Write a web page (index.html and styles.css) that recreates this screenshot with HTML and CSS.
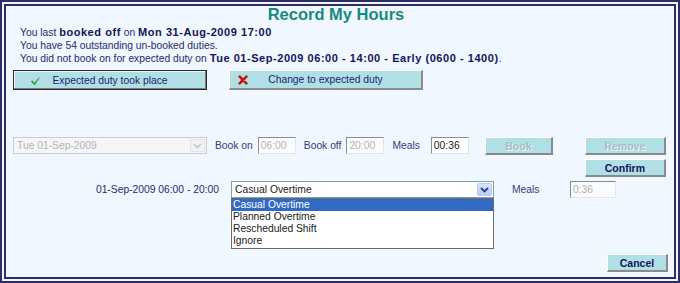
FILE: index.html
```html
<!DOCTYPE html>
<html lang="en">
<head>
    <meta charset="UTF-8">
    <title>Record My Hours</title>
    <link rel="stylesheet" href="styles.css">
</head>
<body>
    <div class="frame">
        <h1 class="title">Record My Hours</h1>

        <div class="info">
            <p class="info-first">You last <b>booked off</b> on <b>Mon 31-Aug-2009 17:00</b></p>
            <p>You have 54 outstanding un-booked duties.</p>
            <p>You did not book on for expected duty on <b>Tue 01-Sep-2009 06:00 - 14:00 - Early (0600 - 1400)</b>.</p>
        </div>

        <div class="choice-row">
            <button class="choice focused">
                <svg class="ico-check" width="12" height="11" viewBox="0 0 14 12">
                    <path d="M1 7 L3 6 L5 9 Q8 4 13 1 Q9 5 6 11 L4.5 11 Z" fill="#2f9a2a"/>
                </svg>
                <span>Expected duty took place</span>
            </button>
            <button class="choice second">
                <svg class="ico-cross" width="10" height="10" viewBox="0 0 12 12">
                    <path d="M2 2 L10 10 M10 2 L2 10" stroke="#c81414" stroke-width="3.2" stroke-linecap="round"/>
                </svg>
                <span>Change to expected duty</span>
            </button>
        </div>

        <div class="book-row">
            <div class="combo disabled date-combo">
                <span class="combo-text">Tue 01-Sep-2009</span>
                <span class="combo-arrow">
                    <svg width="9" height="6" viewBox="0 0 9 6"><path d="M1 1 L4.5 4.5 L8 1" stroke="#c4c8cc" stroke-width="1.6" fill="none"/></svg>
                </span>
            </div>
            <label class="lbl">Book on</label>
            <input class="time" type="text" value="06:00" disabled>
            <label class="lbl">Book off</label>
            <input class="time" type="text" value="20:00" disabled>
            <label class="lbl lbl-meal-top">Meals</label>
            <input class="time" type="text" value="00:36">
            <button class="btn btn-book" disabled>Book</button>
            <div class="side-buttons">
                <button class="btn" disabled>Remove</button>
                <button class="btn">Confirm</button>
            </div>
        </div>

        <div class="shift-row">
            <span class="shift-label">01-Sep-2009 06:00 - 20:00</span>
            <div class="combo open type-combo">
                <span class="combo-text">Casual Overtime</span>
                <span class="combo-arrow">
                    <svg width="9" height="6" viewBox="0 0 9 6"><path d="M1 1 L4.5 4.5 L8 1" stroke="#2c3f8c" stroke-width="1.8" fill="none"/></svg>
                </span>
                <ul class="combo-list">
                    <li class="selected">Casual Overtime</li>
                    <li>Planned Overtime</li>
                    <li>Rescheduled Shift</li>
                    <li>Ignore</li>
                </ul>
            </div>
            <label class="lbl lbl-meals">Meals</label>
            <input class="time wide" type="text" value="0:36" disabled>
        </div>

        <div class="footer">
            <button class="btn btn-cancel">Cancel</button>
        </div>
    </div>
</body>
</html>
```

FILE: styles.css
```css
body, html {
    margin: 0;
    padding: 0;
    background-color: #ffffff;
    font-family: "Liberation Sans", Arial, sans-serif;
    font-size: 10.3px;
    color: #2a2a6c;
}

.frame {
    width: 680px;
    height: 283px;
    box-sizing: border-box;
    border: 6px double #2c2c68;
    background-color: #f0f7ff;
    padding: 0 6px 0 7px;
}

.title {
    margin: 0;
    padding-right: 9px;
    text-align: center;
    font-size: 16.5px;
    line-height: 16px;
    color: #178a80;
    font-weight: bold;
}

.info {
    padding-left: 7px;
    margin-top: 4px;
}

.info p {
    margin: 0;
    line-height: 12px;
}

.info .info-first {
    line-height: 13px;
    margin-bottom: 1px;
}

.info b {
    color: #14145a;
    font-size: 11px;
    letter-spacing: 0.55px;
}

/* big choice buttons */
.choice-row {
    display: flex;
    margin-top: 5px;
}

.choice {
    width: 194px;
    height: 20px;
    box-sizing: border-box;
    display: grid;
    grid-template-columns: 36px 1fr 36px;
    align-items: center;
    padding: 0;
    background-color: #b0e0e6;
    font-family: inherit;
    font-size: 10.3px;
    color: #23236a;
    white-space: nowrap;
    border-style: solid;
    border-width: 1px 2px 2px 1px;
    border-color: #ffffff #8a8a8a #8a8a8a #ffffff;
}

.choice span {
    text-align: center;
}

.choice.focused {
    border: 1px solid #2a2a2a;
    box-shadow: inset -1px -1px 0 #7a7a7a, inset 1px 1px 0 #e8f8fa;
}

.choice.second {
    margin-left: 22px;
}

.ico-check {
    justify-self: start;
    margin-left: 16px;
}

.ico-cross {
    justify-self: start;
    margin-left: 8px;
}

/* booking row */
.book-row {
    display: flex;
    align-items: flex-start;
    margin-top: 47px;
}

.combo {
    height: 17px;
    box-sizing: border-box;
    display: flex;
    align-items: center;
    background-color: #ffffff;
    border: 1px solid #7f9db9;
    position: relative;
}

.combo-text {
    flex: 1;
    padding-left: 3px;
}

.combo-arrow {
    width: 15px;
    height: 13px;
    margin-right: 1px;
    display: flex;
    align-items: center;
    justify-content: center;
    border-radius: 2px;
    background: linear-gradient(#d8e6fc, #b8cef6);
    border: 1px solid #b9cbe8;
    box-sizing: border-box;
}

.combo.disabled {
    background-color: #f4f6f8;
    border-color: #c9cdd2;
    color: #b0b4b8;
}

.combo.disabled .combo-arrow {
    background: #f0f2f4;
    border-color: #e0e3e6;
}

.date-combo {
    width: 194px;
}

.lbl {
    margin-left: 8px;
    margin-right: 5px;
    line-height: 17px;
    color: #3a3a7a;
}

.lbl-meal-top {
    margin-right: 11px;
}

.time {
    width: 38px;
    height: 17px;
    box-sizing: border-box;
    padding: 0 2px;
    font-family: inherit;
    font-size: 10.3px;
    color: #1a1a1a;
    background-color: #ffffff;
    border-style: solid;
    border-width: 1px;
    border-color: #8c8c8c #e4e4e4 #e4e4e4 #8c8c8c;
    outline: none;
}

.time:disabled {
    color: #b4b4b4;
    background-color: #fbfcfd;
}

.btn {
    height: 18px;
    box-sizing: border-box;
    padding: 0;
    background-color: #b0e0e6;
    font-family: inherit;
    font-size: 10.5px;
    font-weight: bold;
    color: #14145a;
    border-style: solid;
    border-width: 1px 2px 2px 1px;
    border-color: #ffffff #8a8a8a #8a8a8a #ffffff;
}

.btn:disabled {
    color: #a9bcc2;
    text-shadow: 1px 1px 0 #e8f6f8;
}

.btn-book {
    width: 68px;
    margin-left: 16px;
}

.side-buttons {
    display: flex;
    flex-direction: column;
    gap: 4px;
    margin-left: 32px;
}

.side-buttons .btn {
    width: 81px;
}

/* shift row */
.shift-row {
    display: flex;
    align-items: flex-start;
    margin-top: 4px;
}

.shift-label {
    width: 206px;
    text-align: right;
    line-height: 17px;
    color: #2a2a6e;
}

.type-combo {
    width: 263px;
    margin-left: 12px;
    color: #1a1a1a;
}

.combo-list {
    position: absolute;
    top: 16px;
    left: -1px;
    width: 263px;
    box-sizing: border-box;
    margin: 0;
    padding: 0 0 1px;
    list-style: none;
    background-color: #ffffff;
    border: 1px solid #6a6a6a;
    z-index: 5;
}

.combo-list li {
    height: 12px;
    line-height: 12px;
    padding-left: 1px;
    color: #1a1a1a;
}

.combo-list li.selected {
    background-color: #316ac5;
    color: #ffffff;
}

.lbl-meals {
    margin-left: 18px;
    margin-right: 0;
    width: 58px;
}

.time.wide {
    width: 46px;
}

.footer {
    display: flex;
    justify-content: flex-end;
    margin-top: 56px;
}

.btn-cancel {
    width: 61px;
}
```
